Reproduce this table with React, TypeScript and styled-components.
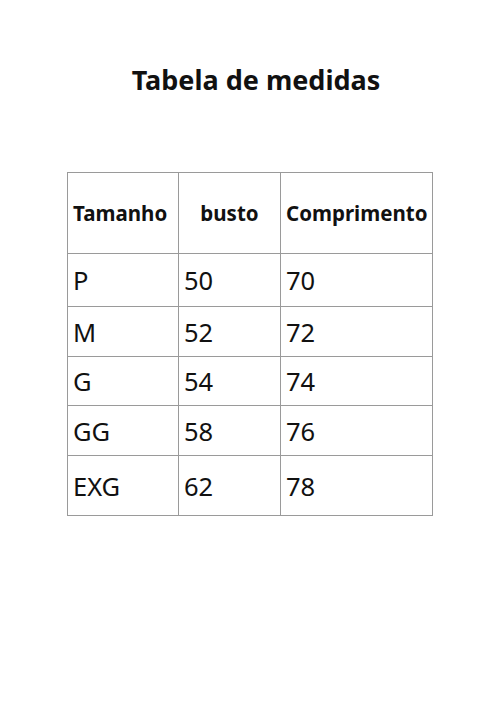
import React from "react";
import styled, { createGlobalStyle } from "styled-components";

const GlobalStyle = createGlobalStyle`
  body {
    margin: 0;
    background: #ffffff;
    font-family: "Noto Sans", "Open Sans", sans-serif;
    color: #111111;
  }
`;

const Page = styled.main`
  width: 500px;
  height: 707px;
  display: flex;
  flex-direction: column;
  align-items: center;
  padding-top: 62px;
  box-sizing: border-box;
`;

const Title = styled.h1`
  margin: 0 0 0 12px;
  font-size: 27px;
  font-weight: 700;
  line-height: 36px;
`;

const Table = styled.table`
  margin-top: 74px;
  border-collapse: collapse;
  table-layout: fixed;
  width: 365px;
`;

const HeadCell = styled.th<{ $center?: boolean }>`
  height: 80px;
  padding: 0 0 0 ${(p) => (p.$center ? "0" : "5px")};
  border: 1px solid #9a9a9a;
  font-size: 20.5px;
  font-weight: 700;
  text-align: ${(p) => (p.$center ? "center" : "left")};
  vertical-align: middle;
  white-space: nowrap;
`;

const Cell = styled.td<{ $h: number }>`
  height: ${(p) => p.$h}px;
  padding: 0 0 0 5px;
  border: 1px solid #9a9a9a;
  font-size: 25.5px;
  font-weight: 400;
  vertical-align: middle;
`;

const rows = [
  { size: "P", busto: "50", comp: "70", h: 52 },
  { size: "M", busto: "52", comp: "72", h: 49 },
  { size: "G", busto: "54", comp: "74", h: 48 },
  { size: "GG", busto: "58", comp: "76", h: 49 },
  { size: "EXG", busto: "62", comp: "78", h: 59 },
];

export default function App() {
  return (
    <>
      <GlobalStyle />
      <Page>
        <Title>Tabela de medidas</Title>
        <Table>
          <colgroup>
            <col style={{ width: 111 }} />
            <col style={{ width: 102 }} />
            <col style={{ width: 152 }} />
          </colgroup>
          <thead>
            <tr>
              <HeadCell>Tamanho</HeadCell>
              <HeadCell $center>busto</HeadCell>
              <HeadCell>Comprimento</HeadCell>
            </tr>
          </thead>
          <tbody>
            {rows.map((r) => (
              <tr key={r.size}>
                <Cell $h={r.h}>{r.size}</Cell>
                <Cell $h={r.h}>{r.busto}</Cell>
                <Cell $h={r.h}>{r.comp}</Cell>
              </tr>
            ))}
          </tbody>
        </Table>
      </Page>
    </>
  );
}
